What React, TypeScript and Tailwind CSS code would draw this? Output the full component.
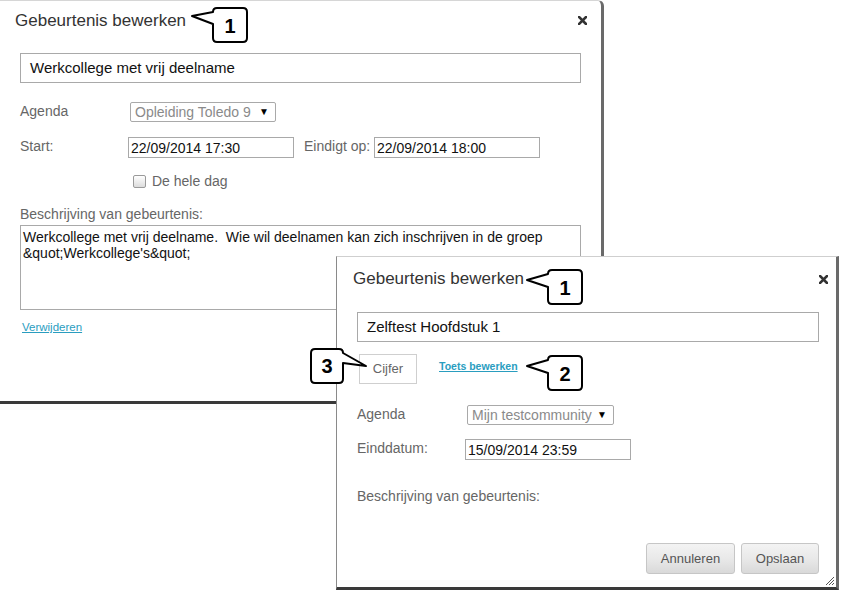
import React from 'react';

const font = { fontFamily: '"Liberation Sans", Arial, sans-serif' };

function CloseIcon() {
  return (
    <svg width="9" height="9" viewBox="0 0 9 9">
      <path d="M1 1 L8 8 M8 1 L1 8" stroke="#333" strokeWidth="2.6" strokeLinecap="square" />
    </svg>
  );
}

function Select({ value, width }: { value: string; width: string }) {
  return (
    <div
      className={`${width} h-[20px] flex items-center justify-between border border-[#a9a9a9] rounded-[2px] pl-[4px] pr-[6px] text-[14px] text-[#8a8a8a] leading-none`}
    >
      <span>{value}</span>
      <span className="text-[10px] text-black">▼</span>
    </div>
  );
}

function DateInput({ value }: { value: string }) {
  return (
    <div className="w-[166px] h-[21px] flex items-center border border-[#a9a9a9] pl-[2px] text-[14px] text-[#111] leading-none">
      {value}
    </div>
  );
}

function Callouts() {
  return (
    <svg className="absolute inset-0 pointer-events-none" width="844" height="593" viewBox="0 0 844 593">
      <g fill="#fff" stroke="#000" strokeWidth="2" strokeLinejoin="round">
        <path d="M217,8 H243 Q247,8 247,12 V38 Q247,42 243,42 H217 Q213,42 213,38 V24 L192,16 L213,12 Q213,8 217,8 Z" />
        <path d="M552,270 H578 Q582,270 582,274 V300 Q582,304 578,304 H552 Q548,304 548,300 V287 L527,280 L548,274 Q548,270 552,270 Z" />
        <path d="M552,356 H578 Q582,356 582,360 V386 Q582,390 578,390 H552 Q548,390 548,386 V373 L527,366 L548,360 Q548,356 552,356 Z" />
        <path d="M315,349 H339 Q343,349 343,353 L366,366 L343,363 V379 Q343,383 339,383 H315 Q311,383 311,379 V353 Q311,349 315,349 Z" />
      </g>
    </svg>
  );
}

function Num({ n, className }: { n: string; className: string }) {
  return (
    <div className={`absolute w-[34px] h-[34px] flex items-center justify-center text-[20px] font-bold text-black ${className}`}>
      {n}
    </div>
  );
}

export default function App() {
  return (
    <div className="relative w-[844px] h-[593px] bg-white overflow-hidden" style={font}>
      {/* first dialog */}
      <div className="absolute left-0 top-0 w-[604px] h-[404px] flex flex-col bg-white border-t border-t-[#d6d6d6] border-r-[3px] border-r-[#6a6a6a] border-b-[3px] border-b-[#3a3a3a] rounded-tr-[6px]">
        <div className="h-[39px] flex items-center justify-between pl-[15px] pr-[14px]">
          <span className="text-[17px] text-[#333]">Gebeurtenis bewerken</span>
          <CloseIcon />
        </div>
        <div className="mt-[13px] mx-[20px] h-[30px] flex items-center border border-[#a9a9a9] pl-[9px] text-[15px] text-[#111]">
          Werkcollege met vrij deelname
        </div>
        <div className="mt-[18px] ml-[20px] flex items-center">
          <span className="w-[110px] text-[14px] text-[#666]">Agenda</span>
          <Select value="Opleiding Toledo 9" width="w-[146px]" />
        </div>
        <div className="mt-[15px] ml-[20px] flex items-center">
          <span className="w-[108px] text-[14px] text-[#666] -mt-[3px]">Start:</span>
          <DateInput value="22/09/2014 17:30" />
          <span className="ml-[10px] w-[70px] text-[14px] text-[#666] -mt-[2px]">Eindigt op:</span>
          <DateInput value="22/09/2014 18:00" />
        </div>
        <div className="mt-[15px] ml-[133px] h-[16px] flex items-center gap-[6px]">
          <span className="w-[13px] h-[13px] border border-[#9a9a9a] rounded-[2px] bg-linear-to-b from-white to-[#dcdcdc]" />
          <span className="text-[14px] text-[#666]">De hele dag</span>
        </div>
        <div className="mt-[17px] ml-[20px] h-[16px] text-[14px] leading-[16px] text-[#666]">Beschrijving van gebeurtenis:</div>
        <div className="mt-[3px] mx-[20px] h-[85px] border border-[#a9a9a9] pl-[2px] pt-[3px] text-[14px] leading-[16px] text-[#111]">
          <div>Werkcollege met vrij deelname.&nbsp; Wie wil deelnamen kan zich inschrijven in de groep</div>
          <div>{'&quot;Werkcollege\'s&quot;'}</div>
        </div>
        <div className="mt-[4px] ml-[22px]">
          <span className="text-[11.5px] text-[#2a9dbf] underline">Verwijderen</span>
        </div>
      </div>

      {/* second dialog */}
      <div className="absolute left-[336px] top-[256px] w-[503px] h-[334px] flex flex-col bg-white border-l border-l-[#8a8a8a] border-t border-t-[#cfcfcf] border-r-[3px] border-r-[#6a6a6a] border-b-[3px] border-b-[#3a3a3a]">
        <div className="h-[44px] flex items-center justify-between pl-[16px] pr-[8px]">
          <span className="text-[17px] text-[#333]">Gebeurtenis bewerken</span>
          <CloseIcon />
        </div>
        <div className="mt-[11px] ml-[20px] mr-[17px] h-[30px] flex items-center border border-[#a9a9a9] pl-[9px] text-[15px] text-[#111]">
          Zelftest Hoofdstuk 1
        </div>
        <div className="mt-[12px] ml-[22px] flex items-start">
          <div className="w-[58px] h-[30px] flex items-center justify-center border border-[#cfcfcf] text-[13px] text-[#666]">
            Cijfer
          </div>
          <span className="ml-[22px] mt-[5px] text-[10.5px] font-bold text-[#2a9dbf] underline">Toets bewerken</span>
        </div>
        <div className="mt-[20px] ml-[20px] flex items-center">
          <span className="w-[110px] text-[14px] text-[#666]">Agenda</span>
          <Select value="Mijn testcommunity" width="w-[147px]" />
        </div>
        <div className="mt-[14px] ml-[20px] flex items-center">
          <span className="w-[108px] text-[14px] text-[#666] -mt-[3px]">Einddatum:</span>
          <DateInput value="15/09/2014 23:59" />
        </div>
        <div className="mt-[28px] ml-[20px] h-[16px] text-[14px] leading-[16px] text-[#666]">Beschrijving van gebeurtenis:</div>
        <div className="mt-auto pb-[13px] pr-[17px] flex justify-end gap-[6px]">
          <div className="w-[89px] h-[31px] flex items-center justify-center border border-[#c6c6c6] rounded-[3px] bg-linear-to-b from-[#f3f3f3] via-[#e9e9e9] to-[#d9d9d9] text-[13px] text-[#555]">
            Annuleren
          </div>
          <div className="w-[78px] h-[31px] flex items-center justify-center border border-[#c6c6c6] rounded-[3px] bg-linear-to-b from-[#f3f3f3] via-[#e9e9e9] to-[#d9d9d9] text-[13px] text-[#555]">
            Opslaan
          </div>
        </div>
        <svg className="absolute right-[1px] bottom-[1px]" width="11" height="11" viewBox="0 0 11 11">
          <path d="M10 2 L2 10 M10 5 L5 10 M10 8 L8 10" stroke="#555" strokeWidth="1" />
        </svg>
      </div>

      <Callouts />
      <Num n="1" className="left-[213px] top-[9px]" />
      <Num n="1" className="left-[548px] top-[271px]" />
      <Num n="2" className="left-[548px] top-[357px]" />
      <Num n="3" className="left-[310px] top-[349px]" />
    </div>
  );
}
